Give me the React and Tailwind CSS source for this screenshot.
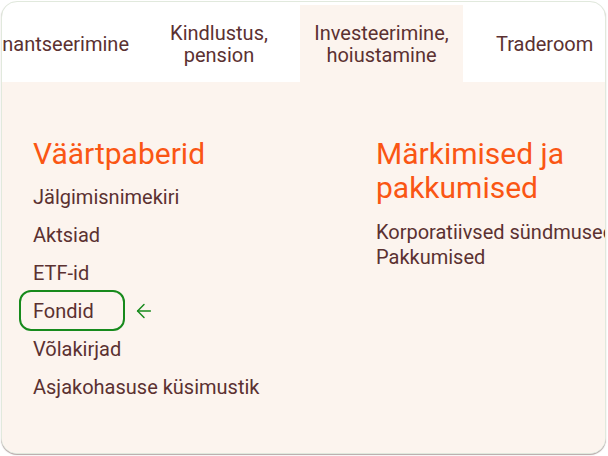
import { ArrowLeft } from 'lucide-react'

const font = { fontFamily: 'Roboto, "Noto Sans", sans-serif' }

function Tab({ children, active, className = '' }) {
  return (
    <div
      className={`flex items-center text-[20px] leading-[22px] text-[#5b3131] ${active ? 'bg-[#fcf4ee]' : ''} ${className}`}
    >
      {children}
    </div>
  )
}

export default function App() {
  const left = ['Jälgimisnimekiri', 'Aktsiad', 'ETF-id', 'Fondid', 'Võlakirjad', 'Asjakohasuse küsimustik']
  const right = ['Korporatiivsed sündmused', 'Pakkumised']

  return (
    <div className="w-[608px] h-[456px] bg-white pt-px pl-px pr-[1px] pb-[2px]" style={font}>
      <div className="h-full w-[605px] rounded-[16px] border border-[#e1e9dd] bg-white shadow-[0_1px_1px_rgba(90,60,60,0.45)] overflow-hidden flex flex-col pt-[3px]">
        {/* Tabs */}
        <div className="flex h-[77px] shrink-0 overflow-hidden">
          <Tab className="w-[136px] shrink-0 justify-end pr-[9px] whitespace-nowrap">
            <span>Finantseerimine</span>
          </Tab>
          <Tab className="w-[162px] shrink-0 justify-center text-center">
            Kindlustus,<br />pension
          </Tab>
          <Tab active className="w-[163px] shrink-0 justify-center text-center">
            Investeerimine,<br />hoiustamine
          </Tab>
          <Tab className="shrink-0 pl-[33px] whitespace-nowrap">Traderoom</Tab>
        </div>

        {/* Menu panel */}
        <div className="flex-1 bg-[#fcf4ee] flex pl-[31px] pt-[55px]">
          <div className="w-[343px] shrink-0">
            <h2 className="text-[30px] leading-[34px] text-[#fa5614] mb-[7px]">Väärtpaberid</h2>
            <ul className="text-[20px] leading-[38px] text-[#5b3131]">
              {left.map((item) => (
                <li key={item} className="relative whitespace-nowrap">
                  {item}
                  {item === 'Fondid' && (
                    <>
                      <span className="absolute left-[-14px] top-[-2px] w-[106px] h-[41px] rounded-[12px] border-2 border-[#178a1c]" />
                      <ArrowLeft className="absolute left-[100px] top-[8px] w-[22px] h-[22px] text-[#178a1c]" strokeWidth={1.6} />
                    </>
                  )}
                </li>
              ))}
            </ul>
          </div>
          <div className="shrink-0">
            <h2 className="text-[30px] leading-[34px] text-[#fa5614] mb-[15px]">
              Märkimised ja<br />pakkumised
            </h2>
            <ul className="text-[20px] leading-[25px] text-[#5b3131]">
              {right.map((item) => (
                <li key={item} className="whitespace-nowrap">{item}</li>
              ))}
            </ul>
          </div>
        </div>
      </div>
    </div>
  )
}
